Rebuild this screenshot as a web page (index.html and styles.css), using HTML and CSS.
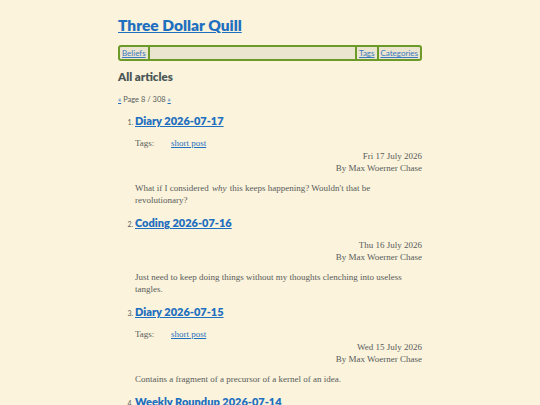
FILE: index.html
```html
<!DOCTYPE html>
<html>
<head>
<meta charset="utf-8">
<link rel="stylesheet" href="styles.css">
</head>
<body>
<div class="page">
  <header class="site-header">
    <h1 class="site-title"><a href="#">Three Dollar Quill</a></h1>
    <nav class="nav">
      <a class="nav-link" href="#">Beliefs</a>
      <span class="nav-fill"></span>
      <a class="nav-link" href="#">Tags</a>
      <a class="nav-link nav-last" href="#">Categories</a>
    </nav>
  </header>
  <main>
    <h2 class="section-title">All articles</h2>
    <p class="pager"><a href="#">«</a> Page 8 / 308 <a href="#">»</a></p>
    <ol class="articles" start="1">
      <li class="article">
        <h3 class="article-title"><a href="#">Diary 2026-07-17</a></h3>
        <div class="tags"><span class="tags-label">Tags:</span><a href="#">short post</a></div>
        <div class="meta"><div>Fri 17 July 2026</div><div>By Max Woerner Chase</div></div>
        <p class="summary">What if I considered <em class="emph">why</em> this keeps happening? Wouldn't that be revolutionary?</p>
      </li>
      <li class="article">
        <h3 class="article-title"><a href="#">Coding 2026-07-16</a></h3>
        <div class="meta"><div>Thu 16 July 2026</div><div>By Max Woerner Chase</div></div>
        <p class="summary">Just need to keep doing things without my thoughts clenching into useless tangles.</p>
      </li>
      <li class="article">
        <h3 class="article-title"><a href="#">Diary 2026-07-15</a></h3>
        <div class="tags"><span class="tags-label">Tags:</span><a href="#">short post</a></div>
        <div class="meta"><div>Wed 15 July 2026</div><div>By Max Woerner Chase</div></div>
        <p class="summary">Contains a fragment of a precursor of a kernel of an idea.</p>
      </li>
      <li class="article">
        <h3 class="article-title"><a href="#">Weekly Roundup 2026-07-14</a></h3>
        <div class="meta"><div>Tue 14 July 2026</div><div>By Max Woerner Chase</div></div>
        <p class="summary">Another week.</p>
      </li>
    </ol>
  </main>
</div>
</body>
</html>
```
FILE: styles.css
```css
html, body {
  margin: 0;
  padding: 0;
}
body {
  background: #fbf3db;
  color: #585c5c;
  font-family: "Liberation Serif", serif;
  font-size: 9px;
  line-height: 12px;
}
a {
  color: #1f6fc0;
}
.page {
  width: 304px;
  margin: 0 auto;
  padding-top: 14px;
}
.site-title {
  margin: 0;
  font-family: "Lato", "Open Sans", sans-serif;
  font-size: 15.5px;
  line-height: 22px;
  font-weight: 800;
}
.site-title a {
  color: #1f6fc0;
}
.nav {
  margin-top: 9px;
  display: flex;
  align-items: stretch;
  border: 2px solid #6c9a28;
  border-radius: 3px;
  background: #ebe4cf;
  height: 12px;
  font-family: "Lato", sans-serif;
  font-size: 8px;
  line-height: 12px;
}
.nav-link {
  padding: 0 2px;
  color: #3a7bbf;
}
.nav-fill {
  flex: 1;
  border-left: 2px solid #6c9a28;
  border-right: 2px solid #6c9a28;
}
.nav-last {
  border-left: 2px solid #6c9a28;
}
.section-title {
  margin: 8px 0 0;
  font-family: "Lato", sans-serif;
  font-size: 11.5px;
  line-height: 16px;
  font-weight: 800;
  color: #4a5757;
}
.pager {
  margin: 9px 0 0;
  font-family: "Lato", sans-serif;
  font-size: 7.5px;
  line-height: 12px;
}
.articles {
  margin: 7px 0 0;
  padding-left: 17px;
}
.article::marker {
  font-family: "Lato", sans-serif;
  font-size: 7px;
}
.article-title {
  margin: 0;
  font-family: "Lato", sans-serif;
  font-size: 11px;
  line-height: 16px;
  font-weight: 800;
  display: inline;
}
.article-title a {
  color: #1f6fc0;
}
.tags {
  margin-top: 8px;
  display: flex;
}
.tags-label {
  width: 36px;
}
.meta {
  margin-top: 1px;
  text-align: right;
}
.article-title + .meta {
  margin-top: 8px;
}
.summary {
  margin: 8px 0 9px;
  line-height: 12px;
}
.emph {
  padding: 0 1px;
}
```
